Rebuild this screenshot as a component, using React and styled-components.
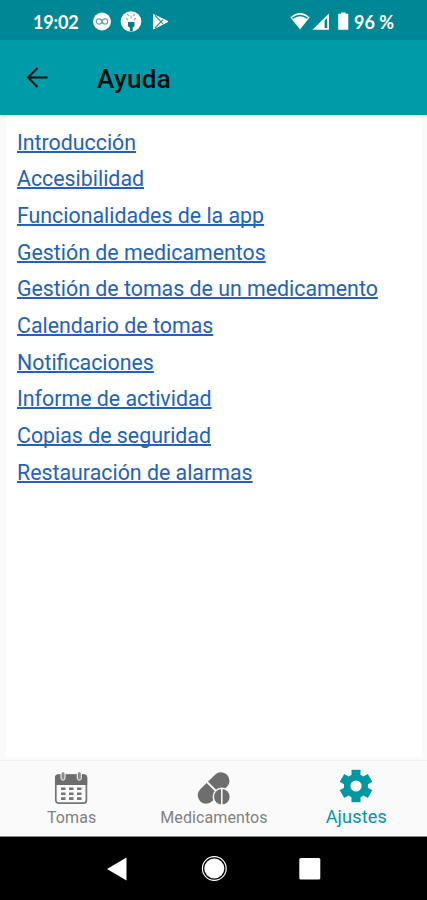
import styled, { createGlobalStyle } from 'styled-components';

const GlobalStyle = createGlobalStyle`
    body {
        margin: 0;
        background: #fafafa;
        font-family: Roboto, "Liberation Sans", sans-serif;
    }
`

const Screen = styled.div`
    width: 427px;
    height: 900px;
    display: flex;
    flex-direction: column;
    overflow: hidden;
    background: #fafafa;

    svg {
        display: block;
        flex: none;
    }
`

const StatusBar = styled.div`
    box-sizing: border-box;
    height: 40px;
    padding: 3px 32px 0 33px;
    display: flex;
    align-items: center;
    justify-content: space-between;
    background: #008796;
    color: #fff;
    font-family: Lato, sans-serif;
    font-size: 18px;
    font-weight: 700;
    line-height: 22px;
`

const StatusGroup = styled.div`
    display: flex;
    align-items: center;
`

const StatusText = styled.span`
    width: ${props => props.$width}px;
    letter-spacing: ${props => props.$spacing || 0}px;
    white-space: nowrap;
`

const AppBar = styled.header`
    position: relative;
    box-sizing: border-box;
    height: 75px;
    flex: none;
    padding: 0 25px;
    display: flex;
    align-items: center;
    gap: 48px;
    background: #009ba8;
    box-shadow: 0 1px 3px rgba(0, 0, 0, 0.2);
`

const Title = styled.h1`
    margin: 0;
    padding-top: 3px;
    color: #050d0e;
    font-size: 26px;
    font-weight: 500;
    line-height: 32px;
    letter-spacing: 0.3px;
`

const Content = styled.main`
    flex: 1;
    margin: 0 5px 3px 6px;
    padding: 9.5px 11px 0;
    background: #fff;
`

const LinkList = styled.ul`
    margin: 0;
    padding: 0;
    list-style: none;
`

const LinkItem = styled.li`
    height: 36.7px;
    line-height: 36.7px;
    font-size: 21.35px;
    white-space: nowrap;
`

const HelpLink = styled.a`
    color: #2461ba;
    text-decoration: underline;
    text-decoration-thickness: 1.5px;
    text-underline-offset: 0.5px;
    text-decoration-skip-ink: none;
`

const TabBar = styled.nav`
    box-sizing: border-box;
    height: 77px;
    flex: none;
    display: flex;
    border-top: 1px solid #f0f0f0;
    border-bottom: 1px solid #8a8a8a;
    background: #fafafa;
`

const Tab = styled.div`
    flex: 1;
    padding-top: ${props => (props.$active ? 8 : 10)}px;
    display: flex;
    flex-direction: column;
    align-items: center;
    color: ${props => (props.$active ? '#0097a5' : '#808080')};
    font-size: ${props => (props.$active ? 18 : 16)}px;
    line-height: 22px;

    span {
        margin-top: ${props => (props.$active ? 3 : 2)}px;
        padding-left: 1px;
        letter-spacing: ${props => (props.$active ? 0.2 : 0.1)}px;
    }
`

const SystemBar = styled.div`
    height: 63px;
    flex: none;
    background: #000;
`

const links = [
    'Introducción',
    'Accesibilidad',
    'Funcionalidades de la app',
    'Gestión de medicamentos',
    'Gestión de tomas de un medicamento',
    'Calendario de tomas',
    'Notificaciones',
    'Informe de actividad',
    'Copias de seguridad',
    'Restauración de alarmas',
];

const StatusIcons = () => (
    <svg width="78" height="24" viewBox="0 0 78 24">
        <circle cx="9" cy="11.5" r="9" fill="#fff" />
        <g fill="none" stroke="#6fa5ad" strokeWidth="1.2">
            <circle cx="6" cy="11.5" r="2.7" />
            <circle cx="12" cy="11.5" r="2.7" />
            <path d="M7.500 9.500l3 4" />
        </g>
        <circle cx="38" cy="11.5" r="10.3" fill="#fff" />
        <path d="M35 12h6.500v4.200l-1.800 1.500v3.500h-2.800v-3.500L35 16.200z" fill="#087987" />
        <g stroke="#7fb3ba" strokeWidth="1.1">
            <path d="M34 4l2 2M42 4l-2 2M38 5.500v3M33 8l2 2M43 8l-2 2" />
        </g>
        <path d="M60.500 4.500v14.500l14.500-7.500z" fill="#fff" stroke="#fff" strokeLinejoin="round" />
        <path d="M62 5.500l8 8.300M62 18l8-8.300" stroke="#2e8e9a" strokeWidth="1.2" />
    </svg>
)

const SignalIcons = () => (
    <svg width="64" height="24" viewBox="0 0 64 24">
        <path d="M0.300 7.300Q10 -1.200 19.700 7.300L10 19.500z" fill="#fff" />
        <path d="M2.500 8.300Q10 2.800 17.500 8.300" fill="none" stroke="#008796" strokeWidth="1.500" />
        <path d="M22.500 19.800L39 3.500v16.300z" fill="#fff" />
        <path d="M34.600 10.500L37.200 8v10h-2.600z" fill="#008796" />
        <path d="M51 2.500h4.500v1.300h2.800v16H48.200v-16H51z" fill="#fff" />
    </svg>
)

const BackArrow = () => (
    <svg width="24" height="24" viewBox="0 0 24 24" fill="none" stroke="#041012" strokeWidth="2">
        <path d="M22.500 11.500H3M12.500 2L3 11.500l9.500 9.500" />
    </svg>
)

const CalendarIcon = () => (
    <svg width="34" height="34" viewBox="0 0 34 34">
        <rect x="1.800" y="4.200" width="30.600" height="28" rx="3" fill="#fafafa" stroke="#757575" strokeWidth="1.700" />
        <path d="M1 14V6.500Q1 3.500 4 3.500h26.200q3 0 3 3V14z" fill="#6d6d6d" />
        <g fill="#8c8c8c" stroke="#fafafa" strokeWidth="1">
            <rect x="7" y="0.700" width="4" height="8.500" rx="2" />
            <rect x="23.300" y="0.700" width="4" height="8.500" rx="2" />
        </g>
        <path d="M7 17.800h4.500M15 17.800h4.500M23 17.800h4.500M7 22.700h4.500M15 22.700h4.500M23 22.700h4.500M7 27.600h4.500M15 27.600h4.500M23 27.600h4.500" stroke="#757575" strokeWidth="2.600" />
    </svg>
)

const PillsIcon = () => (
    <svg width="34" height="34" viewBox="0 0 34 34">
        <path d="M10.200 24.300L25 9.800" stroke="#6e6e6e" strokeWidth="17" strokeLinecap="round" />
        <path d="M11 11L24 24" stroke="#fafafa" strokeWidth="1.800" />
        <circle cx="25.800" cy="25.800" r="9.200" fill="#fafafa" />
        <circle cx="25.800" cy="25.800" r="7.800" fill="#6e6e6e" />
        <path d="M25.800 17v17" stroke="#fafafa" strokeWidth="1.500" />
    </svg>
)

const GearIcon = () => (
    <svg width="34" height="34" viewBox="-17 -17 34 34">
        <g stroke="#0097a5" strokeWidth="9">
            <path d="M0-16.200V16.200" />
            <path d="M0-16.200V16.200" transform="rotate(60)" />
            <path d="M0-16.200V16.200" transform="rotate(120)" />
        </g>
        <circle r="12" fill="#0097a5" />
        <circle r="5.600" fill="#fafafa" />
    </svg>
)

const SystemIcons = () => (
    <svg width="427" height="63" viewBox="0 1 427 63" fill="#fff">
        <path d="M126.500 21.500v23L107 33z" />
        <circle cx="214.300" cy="32.500" r="11.900" fill="none" stroke="#fff" strokeWidth="1.200" />
        <circle cx="214.300" cy="32.500" r="10" />
        <rect x="299.300" y="22" width="21" height="21.500" rx="1.500" />
    </svg>
)

const App = () => {
    return (
        <>
            <GlobalStyle />
            <Screen>
                <StatusBar>
                    <StatusGroup>
                        <StatusText $width={60} $spacing={-0.2}>19:02</StatusText>
                        <StatusIcons />
                    </StatusGroup>
                    <StatusGroup>
                        <SignalIcons />
                        <StatusText $width={41}>96 %</StatusText>
                    </StatusGroup>
                </StatusBar>
                <AppBar>
                    <BackArrow />
                    <Title>Ayuda</Title>
                </AppBar>
                <Content>
                    <LinkList>
                        {links.map(text => (
                            <LinkItem key={text}>
                                <HelpLink href="#">{text}</HelpLink>
                            </LinkItem>
                        ))}
                    </LinkList>
                </Content>
                <TabBar>
                    <Tab>
                        <CalendarIcon />
                        <span>Tomas</span>
                    </Tab>
                    <Tab>
                        <PillsIcon />
                        <span>Medicamentos</span>
                    </Tab>
                    <Tab $active>
                        <GearIcon />
                        <span>Ajustes</span>
                    </Tab>
                </TabBar>
                <SystemBar>
                    <SystemIcons />
                </SystemBar>
            </Screen>
        </>
    )
}

export default App
